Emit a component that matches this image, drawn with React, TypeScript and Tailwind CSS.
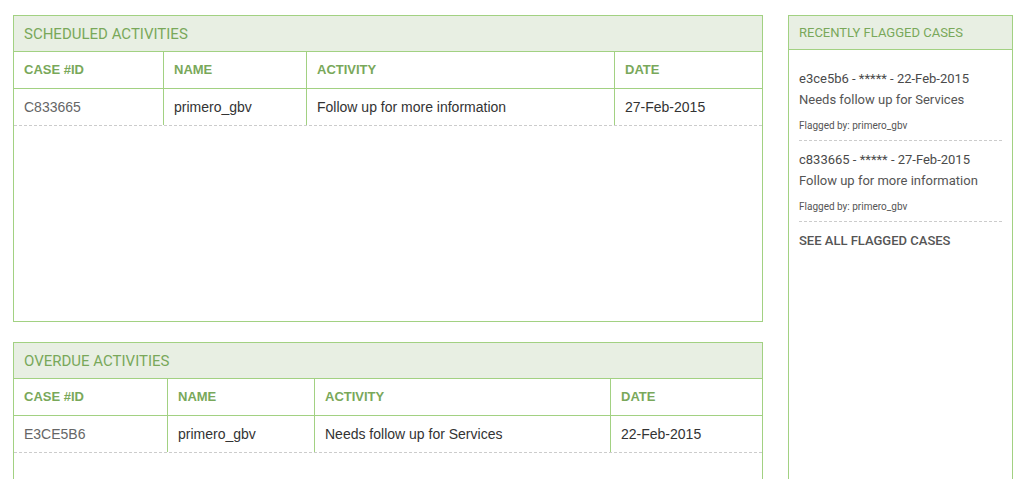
import React from "react";

type Row = { id: string; name: string; activity: string; date: string };

const ActivityPanel: React.FC<{
  title: string;
  widths: string[];
  rows: Row[];
  bodyClass: string;
}> = ({ title, widths, rows, bodyClass }) => (
  <div className={`border border-[#a2d182] bg-white ${bodyClass}`}>
    <div className="h-[36px] bg-[#e8efe3] border-b border-[#a2d182] flex items-center pt-[2px] px-[10px] font-['Roboto',sans-serif] text-[15px] text-[#79a85a]">
      {title}
    </div>
    <div className="flex h-[37px] border-b border-[#a2d182] font-['Liberation_Sans',Arial,sans-serif] text-[13px] font-bold text-[#79a85a]">
      {["CASE #ID", "NAME", "ACTIVITY", "DATE"].map((h, i) => (
        <div
          key={h}
          className={`${widths[i]} flex items-center px-[10px] ${i < 3 ? "border-r border-[#a2d182]" : ""}`}
        >
          {h}
        </div>
      ))}
    </div>
    {rows.map((r) => (
      <div
        key={r.id}
        className="flex h-[37px] border-b border-dashed border-[#cccccc] font-['Liberation_Sans',Arial,sans-serif] text-[14px] text-[#333]"
      >
        {[r.id, r.name, r.activity, r.date].map((c, i) => (
          <div
            key={i}
            className={`${widths[i]} flex items-center px-[10px] ${i === 0 ? "text-[#666]" : ""} ${i < 3 ? "border-r border-[#a2d182]" : ""}`}
          >
            {c}
          </div>
        ))}
      </div>
    ))}
  </div>
);

const flagged = [
  { head: "e3ce5b6 - ***** - 22-Feb-2015", text: "Needs follow up for Services", by: "primero_gbv" },
  { head: "c833665 - ***** - 27-Feb-2015", text: "Follow up for more information", by: "primero_gbv" },
];

export default function App() {
  return (
    <div className="min-h-screen bg-white flex gap-[25px] pl-[13px] pt-[15px]">
      <div className="w-[750px] flex flex-col gap-[20px]">
        <ActivityPanel
          title="SCHEDULED ACTIVITIES"
          widths={["w-[150px]", "w-[143px]", "w-[308px]", "w-[147px]"]}
          rows={[{ id: "C833665", name: "primero_gbv", activity: "Follow up for more information", date: "27-Feb-2015" }]}
          bodyClass="h-[307px]"
        />
        <ActivityPanel
          title="OVERDUE ACTIVITIES"
          widths={["w-[154px]", "w-[147px]", "w-[296px]", "w-[151px]"]}
          rows={[{ id: "E3CE5B6", name: "primero_gbv", activity: "Needs follow up for Services", date: "22-Feb-2015" }]}
          bodyClass="h-[307px]"
        />
      </div>
      <div className="w-[225px] h-[520px] border border-[#a2d182] bg-white font-['Roboto',sans-serif] text-[#555]">
        <div className="h-[34px] bg-[#e8efe3] border-b border-[#a2d182] flex items-center px-[10px] text-[13px] text-[#79a85a]">
          RECENTLY FLAGGED CASES
        </div>
        <div className="px-[10px] pt-[10px]">
          {flagged.map((f) => (
            <div key={f.head} className="border-b border-dashed border-[#cccccc] pt-[9px] pb-[6px]">
              <div className="leading-[20px] text-[13px] text-[#4a4a4a]">{f.head}</div>
              <div className="leading-[20px] text-[13px] mt-[1px]">{f.text}</div>
              <div className="leading-[16px] text-[10px] mt-[8px]">Flagged by: {f.by}</div>
            </div>
          ))}
          <div className="pt-[9px] leading-[20px] text-[13px] font-medium">SEE ALL FLAGGED CASES</div>
        </div>
      </div>
    </div>
  );
}
